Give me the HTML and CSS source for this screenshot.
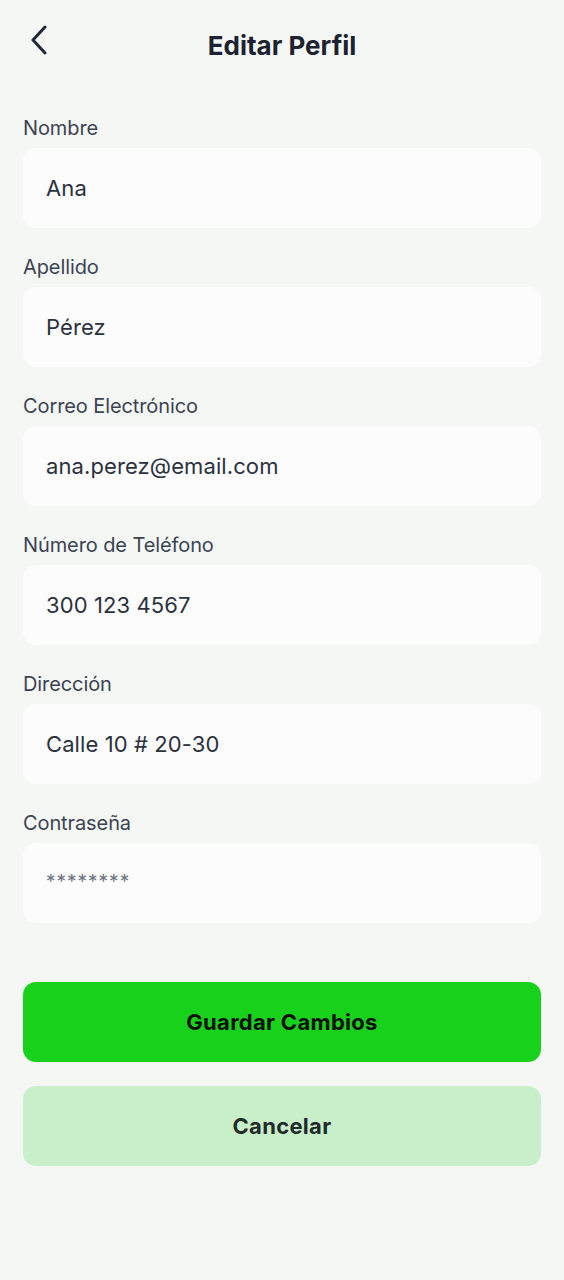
FILE: index.html
```html
<!DOCTYPE html>
<html lang="es">
<head>
<meta charset="utf-8">
<title>Editar Perfil</title>
<link rel="stylesheet" href="styles.css">
</head>
<body>
<div class="screen">
  <header class="header">
    <button class="back" aria-label="Volver">
      <svg width="20" height="30" viewBox="0 0 20 30"><path d="M17 2 L5 15 L17 28" fill="none" stroke="#1f2937" stroke-width="3" stroke-linecap="round" stroke-linejoin="round"/></svg>
    </button>
    <h1 class="title">Editar Perfil</h1>
    <span class="spacer"></span>
  </header>

  <form class="form">
    <div class="field">
      <label class="label">Nombre</label>
      <div class="input">Ana</div>
    </div>
    <div class="field">
      <label class="label">Apellido</label>
      <div class="input">Pérez</div>
    </div>
    <div class="field">
      <label class="label">Correo Electrónico</label>
      <div class="input">ana.perez@email.com</div>
    </div>
    <div class="field">
      <label class="label">Número de Teléfono</label>
      <div class="input">300 123 4567</div>
    </div>
    <div class="field">
      <label class="label">Dirección</label>
      <div class="input">Calle 10 # 20-30</div>
    </div>
    <div class="field">
      <label class="label">Contraseña</label>
      <div class="input placeholder">********</div>
    </div>

    <div class="actions">
      <button type="button" class="btn btn-primary">Guardar Cambios</button>
      <button type="button" class="btn btn-secondary">Cancelar</button>
    </div>
  </form>
</div>
</body>
</html>
```

FILE: styles.css
```css
* { box-sizing: border-box; }
html, body {
  margin: 0;
  padding: 0;
  background: #f5f7f5;
  font-family: Inter, "Noto Sans", "Liberation Sans", sans-serif;
}
.screen {
  width: 564px;
  min-height: 1280px;
  padding: 0 23px;
}
.header {
  display: flex;
  align-items: center;
  height: 90px;
}
.back,
.spacer {
  width: 40px;
  flex: none;
}
.back {
  height: 32px;
  padding: 0 0 0 5px;
  margin-top: -10px;
  border: none;
  background: none;
  display: flex;
  align-items: center;
  justify-content: flex-start;
}
.title {
  flex: 1;
  margin: 0;
  text-align: center;
  font-size: 26px;
  font-weight: 700;
  color: #1c2230;
  letter-spacing: 0;
}
.form {
  display: flex;
  flex-direction: column;
  gap: 27px;
  padding-top: 26px;
}
.field {
  display: flex;
  flex-direction: column;
  gap: 8px;
}
.label {
  font-size: 20px;
  line-height: 24px;
  color: #3b4352;
  letter-spacing: -0.1px;
}
.input {
  height: 80px;
  border-radius: 13px;
  background: #fcfcfc;
  padding: 0 23px;
  display: flex;
  align-items: center;
  font-size: 22px;
  color: #2b313d;
  letter-spacing: 0.1px;
}
.input.placeholder {
  color: #6b7280;
  font-size: 19px;
  letter-spacing: 1px;
  padding-bottom: 4px;
}
.actions {
  display: flex;
  flex-direction: column;
  gap: 24px;
  margin-top: 32px;
}
.btn {
  height: 80px;
  border: none;
  border-radius: 13px;
  font-family: inherit;
  font-size: 22px;
  font-weight: 700;
  letter-spacing: 0.3px;
}
.btn-primary {
  background: #18d11a;
  color: #0b0f0b;
}
.btn-secondary {
  background: #c9efca;
  color: #1f2b2b;
}
```
